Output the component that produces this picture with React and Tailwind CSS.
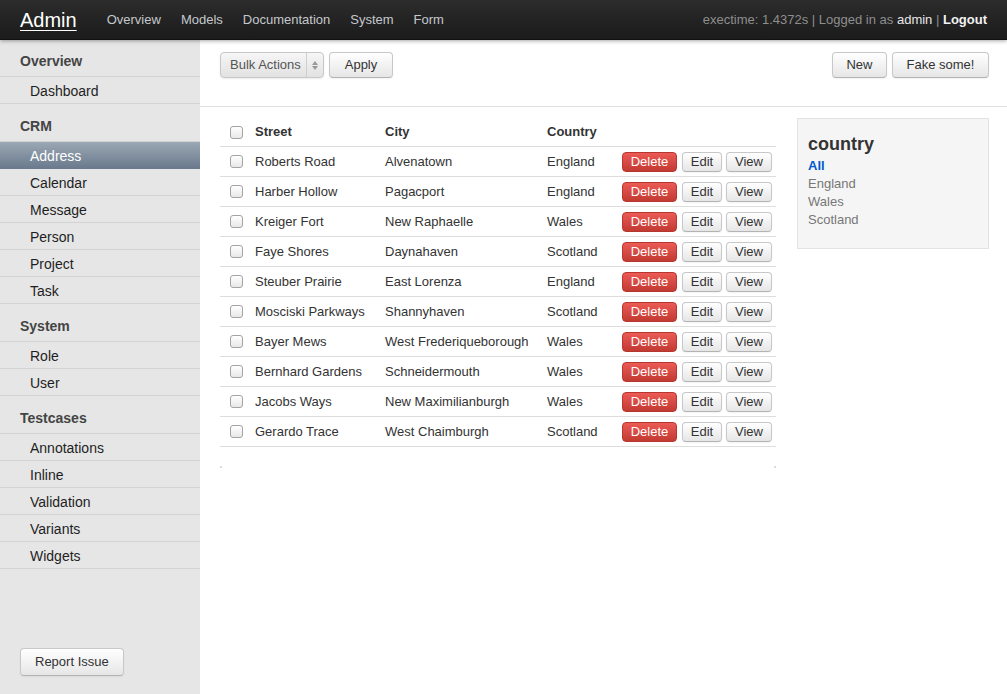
import React from 'react';

const navLinks = ['Overview', 'Models', 'Documentation', 'System', 'Form'];

const menu = [
  { title: 'Overview', items: ['Dashboard'] },
  { title: 'CRM', items: ['Address', 'Calendar', 'Message', 'Person', 'Project', 'Task'] },
  { title: 'System', items: ['Role', 'User'] },
  { title: 'Testcases', items: ['Annotations', 'Inline', 'Validation', 'Variants', 'Widgets'] },
];

const rows = [
  ['Roberts Road', 'Alvenatown', 'England'],
  ['Harber Hollow', 'Pagacport', 'England'],
  ['Kreiger Fort', 'New Raphaelle', 'Wales'],
  ['Faye Shores', 'Daynahaven', 'Scotland'],
  ['Steuber Prairie', 'East Lorenza', 'England'],
  ['Mosciski Parkways', 'Shannyhaven', 'Scotland'],
  ['Bayer Mews', 'West Frederiqueborough', 'Wales'],
  ['Bernhard Gardens', 'Schneidermouth', 'Wales'],
  ['Jacobs Ways', 'New Maximilianburgh', 'Wales'],
  ['Gerardo Trace', 'West Chaimburgh', 'Scotland'],
];

const btn =
  'inline-flex items-center justify-center rounded-[4px] border border-[#c8c8c8] border-b-[#b3b3b3] bg-gradient-to-b from-white to-[#e6e6e6] text-[#333] shadow-[inset_0_1px_0_rgba(255,255,255,0.4),0_1px_2px_rgba(0,0,0,0.05)]';

const Checkbox = () => (
  <span className="block w-[13px] h-[13px] rounded-[3px] border border-[#a3a3a3] bg-gradient-to-b from-white to-[#e8e8e8]" />
);

const App = () => {
  return (
    <div className="min-h-screen flex flex-col font-['Liberation_Sans',Arial,sans-serif] text-[13px]">
      <nav className="h-10 shrink-0 flex items-center px-5 bg-gradient-to-b from-[#2c2c2c] to-[#1b1b1b] border-b border-[#111] relative z-10 shadow-[0_1px_4px_rgba(0,0,0,0.35)]">
        <span className="text-[20px] text-white underline underline-offset-[3px] decoration-1 mr-[20px]">Admin</span>
        {navLinks.map((l) => (
          <span key={l} className="px-[10px] text-[13px] text-[#c4c8cc]">{l}</span>
        ))}
        <div className="ml-auto text-[13px] text-[#8e8e8e]">
          exectime: 1.4372s | Logged in as <span className="text-[#e8e8e8]">admin</span> | <span className="font-bold text-[#f2f2f2]">Logout</span>
        </div>
      </nav>

      <div className="flex flex-1">
        <aside className="w-[200px] shrink-0 bg-[#e6e6e6] flex flex-col">
          {menu.map((group, gi) => (
            <div key={group.title}>
              <div className={`${gi === 0 ? 'h-[37px] pt-[13px]' : 'h-[38px] pt-[14px]'} leading-[16px] px-5 border-b border-[#d3d3d3] text-[14px] font-bold text-[#444]`}>
                {group.title}
              </div>
              {group.items.map((item) => (
                <div
                  key={item}
                  className={
                    item === 'Address'
                      ? 'h-[27px] flex items-center pt-[2px] pl-[30px] text-[14px] text-white bg-gradient-to-b from-[#9ba8b5] to-[#6b7b8d] border-b border-[#6b7b8d]'
                      : 'h-[27px] flex items-center pt-[2px] pl-[30px] text-[14px] text-[#1e1e1e] border-b border-[#d3d3d3]'
                  }
                >
                  {item}
                </div>
              ))}
            </div>
          ))}
          <div className="mt-auto px-5 pb-[18px]">
            <button className={`${btn} h-[28px] px-[14px] text-[13px]`}>Report Issue</button>
          </div>
        </aside>

        <main className="flex-1 bg-white">
          <div className="h-[67px] flex items-start pt-[12px] pl-5 pr-[18px] border-b border-[#e0e0e0]">
            <div className="h-[26px] w-[104px] flex items-center rounded-[4px] border border-[#c8c8c8] bg-gradient-to-b from-[#f6f6f6] to-[#e2e2e2] shadow-[0_1px_2px_rgba(0,0,0,0.08)]">
              <span className="pl-[9px] text-[13px] text-[#555] flex-1">Bulk Actions</span>
              <span className="h-full w-[17px] border-l border-[#cfcfcf] flex flex-col items-center justify-center gap-[1px]">
                <svg width="6" height="4" viewBox="0 0 6 4"><path d="M3 0L6 4H0z" fill="#999" /></svg>
                <svg width="6" height="4" viewBox="0 0 6 4"><path d="M0 0H6L3 4z" fill="#999" /></svg>
              </span>
            </div>
            <button className={`${btn} h-[26px] w-[64px] ml-[5px] text-[13px]`}>Apply</button>
            <div className="ml-auto flex gap-[5px]">
              <button className={`${btn} h-[26px] w-[55px] text-[13px]`}>New</button>
              <button className={`${btn} h-[26px] w-[97px] text-[13px]`}>Fake some!</button>
            </div>
          </div>

          <div className="flex items-start pl-5 pt-[10px] gap-[21px]">
            <div className="w-[556px]">
              <div className="grid grid-cols-[35px_130px_162px_75px_1fr] h-[29px] items-center pt-[1px] text-[13px] font-bold text-[#333]">
                <div className="pl-[10px]"><Checkbox /></div>
                <div>Street</div>
                <div>City</div>
                <div>Country</div>
                <div />
              </div>
              {rows.map(([street, city, country]) => (
                <div key={street} className="grid grid-cols-[35px_130px_162px_75px_1fr] h-[30px] items-center border-t border-[#dddddd] text-[13px] text-[#333]">
                  <div className="pl-[10px]"><Checkbox /></div>
                  <div className="whitespace-nowrap">{street}</div>
                  <div className="whitespace-nowrap">{city}</div>
                  <div>{country}</div>
                  <div className="flex items-center">
                    <button className="h-[20px] w-[55px] rounded-[4px] border border-[#b5372f] bg-gradient-to-b from-[#ec5a55] to-[#c23a32] text-white text-[13px] leading-none">Delete</button>
                    <button className={`${btn} h-[20px] w-[40px] ml-[5px] text-[13px] leading-none`}>Edit</button>
                    <button className={`${btn} h-[20px] w-[46px] ml-[4px] text-[13px] leading-none`}>View</button>
                  </div>
                </div>
              ))}
              <div className="border-t border-[#dddddd]" />
              <div className="mt-[19px] flex justify-between">
                <span className="w-[2px] h-[2px] bg-[#dcdcdc]" />
                <span className="w-[2px] h-[2px] bg-[#dcdcdc]" />
              </div>
            </div>

            <div className="w-[192px] mt-[1px] bg-[#f5f5f5] border border-[#e3e3e3] pl-[10px] pt-[15px] pb-[19px]">
              <div className="text-[18px] font-bold text-[#333] leading-[20px] mb-[3px]">country</div>
              <div className="text-[13px] font-bold text-[#0058cc] leading-[18px]">All</div>
              <div className="text-[13px] text-[#777] leading-[18px]">England</div>
              <div className="text-[13px] text-[#777] leading-[18px]">Wales</div>
              <div className="text-[13px] text-[#777] leading-[18px]">Scotland</div>
            </div>
          </div>
        </main>
      </div>
    </div>
  );
};

export default App;
